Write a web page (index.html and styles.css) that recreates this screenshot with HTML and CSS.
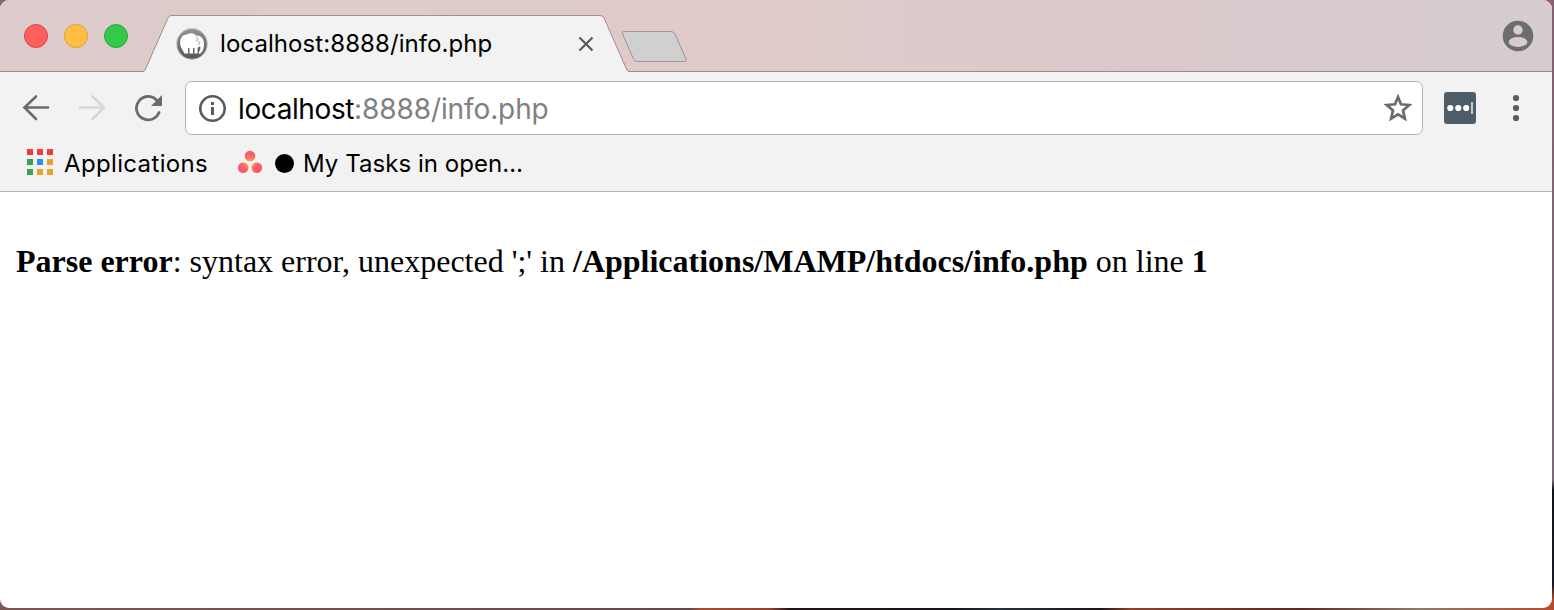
FILE: index.html
```html
<!DOCTYPE html>
<html lang="en">
<head>
<meta charset="utf-8">
<title>localhost:8888/info.php</title>
<link rel="stylesheet" href="styles.css">
</head>
<body>
<div class="window">
  <header class="titlebar">
    <div class="lights">
      <span class="light light-close"></span>
      <span class="light light-min"></span>
      <span class="light light-max"></span>
    </div>
    <div class="tab">
      <svg class="tab-shape" width="486" height="57" viewBox="0 0 486 57">
        <path d="M0 57V56.500Q2 56.500 3 54L25 3Q26 .5 28 .5H457Q460 .5 461 3L483 54Q484 56.500 486 56.500V57Z" fill="#f2f2f2"/>
        <path d="M0 56.500Q1.500 56.500 2.500 54L25 3Q26 .5 28 .5H457Q460 .5 461 3L483.500 54Q484.500 56.500 486 56.500" fill="none" stroke="#9f8f8f"/>
      </svg>
      <svg class="favicon" width="32" height="32" viewBox="0 0 32 32">
        <defs><linearGradient id="ring" x2="0" y2="1"><stop stop-color="#929292"/><stop offset="1" stop-color="#575757"/></linearGradient></defs>
        <circle cx="16" cy="16" r="15.700" fill="#b4b4b4"/>
        <circle cx="16" cy="16" r="14.700" fill="url(#ring)"/>
        <path d="M4.500 18C3 11 6 6.500 11 6.500C14 4.500 18 5 20 7.500C25 7 28 11 28 16C28 21 26 25 23.500 26L22.500 24.500C24.500 22 25 20 24 18L21.500 20V25.500H18.500V20H17V25.500H13.500V20H12V25.500H8.500L6 21Z" fill="#fff"/>
        <path d="M20 8.500L22 11.500L20.500 13.500M24 13L22.500 17" fill="none" stroke="#bbb" stroke-width="1.300"/>
      </svg>
      <span class="tab-title">localhost:8888/info.php</span>
      <svg class="tab-close" width="16" height="16" viewBox="0 0 16 16"><path d="M1.500 1.500L14.500 14.500M14.500 1.500L1.500 14.500" stroke="#5a5a5d" stroke-width="2.200"/></svg>
    </div>
    <svg class="new-tab" width="67" height="33" viewBox="0 0 67 33"><path d="M3 .5H50Q52.500 .5 54 3L65 28Q66 30.500 63.500 30.500H16Q14 30.500 12.500 28L1.500 3Q.5 .5 3 .5Z" fill="#d0d0d0" stroke="#9e9595"/></svg>
    <svg class="avatar" width="32" height="32" viewBox="0 0 32 32"><circle cx="16" cy="16" r="15.300" fill="#6d6d6d"/><circle cx="16" cy="10" r="4.700" fill="#d7ccd0"/><ellipse cx="16" cy="22" rx="9.400" ry="4.900" fill="#d7ccd0"/></svg>
  </header>
  <div class="toolbar">
    <svg class="back" width="28" height="28" viewBox="0 0 28 28"><path d="M26 13.500H3M14 2.500L2.500 13.500L14 25" fill="none" stroke="#6b6b6b" stroke-width="2.600" stroke-linecap="round"/></svg>
    <svg class="forward" width="28" height="28" viewBox="0 0 28 28"><path d="M2 13.500H25M14.500 2.500L26 13.500L14.500 25" fill="none" stroke="#d7d7d7" stroke-width="2.600" stroke-linecap="round"/></svg>
    <svg class="reload" width="28" height="28" viewBox="0 0 28 28"><path d="M25 18.500A11.700 11.700 0 1 1 22.500 6" fill="none" stroke="#6b6b6b" stroke-width="2.800" stroke-linecap="round"/><path d="M28 1V12H17Z" fill="#6b6b6b"/></svg>
    <div class="omnibox">
      <svg width="28" height="28" viewBox="0 0 28 28"><circle cx="14.500" cy="14.500" r="12.200" fill="none" stroke="#5b5b5b" stroke-width="2.600"/><path d="M13 8H16V11H13ZM13 13H16V21H13Z" fill="#5b5b5b"/></svg>
      <span class="url">localhost<span class="url-rest">:8888/info.php</span></span>
      <svg class="star" width="30" height="30" viewBox="0 0 30 30"><path d="M15 4L18 11.300L26.200 12L20 17.400L21.900 25.600L15 21.300L8.100 25.600L10 17.400L3.800 12L12 11.300Z" fill="none" stroke="#6b6b6b" stroke-width="2.700"/></svg>
    </div>
    <svg class="extension" width="32" height="32" viewBox="0 0 32 32"><rect width="32" height="32" rx="3" fill="#4c5d67"/><g fill="#fff"><circle cx="6.300" cy="16" r="3.100"/><circle cx="14.300" cy="16" r="3.100"/><circle cx="22.200" cy="16" r="3.100"/></g><rect x="27" y="10" width="2" height="12" fill="#c5cacd"/></svg>
    <svg class="menu" width="8" height="28" viewBox="0 0 8 28"><g fill="#5b5b5b"><circle cx="4" cy="4" r="3.100"/><circle cx="4" cy="14" r="3.100"/><circle cx="4" cy="24" r="3.100"/></g></svg>
  </div>
  <nav class="bookmarks">
    <div class="apps-grid">
      <i class="red"></i><i class="red"></i><i class="red"></i>
      <i class="green"></i><i class="blue"></i><i class="amber"></i>
      <i class="green"></i><i class="amber"></i><i class="amber"></i>
    </div>
    <span class="label label-apps">Applications</span>
    <svg class="asana" width="24" height="24" viewBox="0 0 24 24">
      <defs><radialGradient id="coral" gradientUnits="userSpaceOnUse" cx="12" cy="13" r="14"><stop stop-color="#ffb13d"/><stop offset=".55" stop-color="#fb636b"/><stop offset="1" stop-color="#fb5074"/></radialGradient></defs>
      <g fill="url(#coral)"><circle cx="12" cy="6" r="5.300"/><circle cx="5.200" cy="17.800" r="5.300"/><circle cx="18.800" cy="17.800" r="5.300"/></g>
    </svg>
    <span class="dot"></span>
    <span class="label label-tasks">My Tasks in open…</span>
  </nav>
  <main class="page"><b>Parse error</b>: syntax error, unexpected ';' in <b>/Applications/MAMP/htdocs/info.php</b> on line <b>1</b></main>
</div>
</body>
</html>
```
FILE: styles.css
```css
* { box-sizing: border-box; }
body {
  margin: 0;
  width: 1554px;
  height: 610px;
  overflow: hidden;
  background:
    linear-gradient(90deg, #7d5654 0, #65494a 690px, #a84d31 700px, #93402e 770px, #211417 790px, #17141a 950px, #26313a 1000px, #1c1518 1100px, #8e412b 1130px, #5a2a22 1300px, #8e7a68 1420px, #b64c2d 1550px) 0 100% / 1552px 8px no-repeat,
    linear-gradient(#8b6171, #8b6171) 0 0 / 1552px 12px no-repeat,
    linear-gradient(#84606f 0, #796b7b 480px, #11131b 490px, #171a25 585px, #b44b2e 600px);
  font-family: Inter, "Liberation Sans", sans-serif;
}
.window {
  display: flex;
  flex-direction: column;
  width: 1552px;
  height: 608px;
  border-radius: 9px;
  overflow: hidden;
  background: #fff;
}
.titlebar {
  display: flex;
  flex: none;
  height: 72px;
  border-bottom: 1px solid #998b8d;
  background: linear-gradient(90deg, #dccbcb 0, #dfcbca 400px, #dfcac9 780px, #dac9cb 1130px, #d6cbcf 1450px);
}
.lights { display: flex; gap: 16px; width: 144px; padding: 24px 0 0 24px; }
.light { width: 24px; height: 24px; border-radius: 50%; border: 1px solid; }
.light-close { background: #fd605c; border-color: #e2433f; }
.light-min { background: #ffbe41; border-color: #e1a032; }
.light-max { background: #34c94a; border-color: #21ac35; }
.tab { position: relative; display: flex; flex: none; width: 484px; height: 57px; margin-top: 15px; padding: 13px 0 0 32px; }
.tab-shape { position: absolute; left: -1px; top: 0; }
.favicon, .tab-title, .tab-close { position: relative; flex: none; }
.tab-title { width: 358px; margin-left: 12px; font-size: 24px; line-height: 32px; letter-spacing: .08px; white-space: nowrap; }
.tab-close { margin-top: 8px; }
.new-tab { flex: none; margin: 31px 0 0 -7px; }
.avatar { margin: 20px 18px 0 auto; }
.toolbar { display: flex; flex: none; align-items: center; height: 72px; padding: 0 32px 0 22px; background: #f2f2f2; }
.forward { margin-left: 28px; }
.reload { margin-left: 28px; }
.toolbar svg { flex: none; }
.omnibox { display: flex; align-items: center; width: 1238px; height: 54px; margin-left: 23px; padding: 0 9px 0 12px; border: 1px solid #b5b5b5; border-radius: 7px; background: #fff; }
.url { margin-left: 12px; padding-top: 2px; font-size: 28px; letter-spacing: -.4px; white-space: nowrap; }
.url-rest { color: #808080; letter-spacing: -.1px; }
.star { margin-left: auto; }
.extension { margin-left: 21px; }
.menu { margin-left: 36px; }
.bookmarks { display: flex; flex: none; align-items: center; height: 48px; padding: 0 0 11px 27px; background: #f2f2f2; border-bottom: 1px solid #b5b5b5; }
.apps-grid { display: grid; grid-template-columns: repeat(3, 6px); gap: 4px; }
.apps-grid i { height: 6px; }
.red { background: #f33b3c; }
.green { background: #3b9e5c; }
.blue { background: #2b8ff5; }
.amber { background: #eda124; }
.label { padding-top: 3px; font-size: 24px; line-height: 30px; white-space: nowrap; }
.label-apps { width: 144px; margin-left: 11px; letter-spacing: .35px; }
.asana { margin-left: 30px; }
.dot { width: 19px; height: 19px; margin: 2px 0 0 13px; border-radius: 50%; background: #000; }
.label-tasks { margin-left: 9px; letter-spacing: .05px; }
.page { padding: 51px 16px; font: 32px/36px "Liberation Serif", serif; white-space: pre; }
```
